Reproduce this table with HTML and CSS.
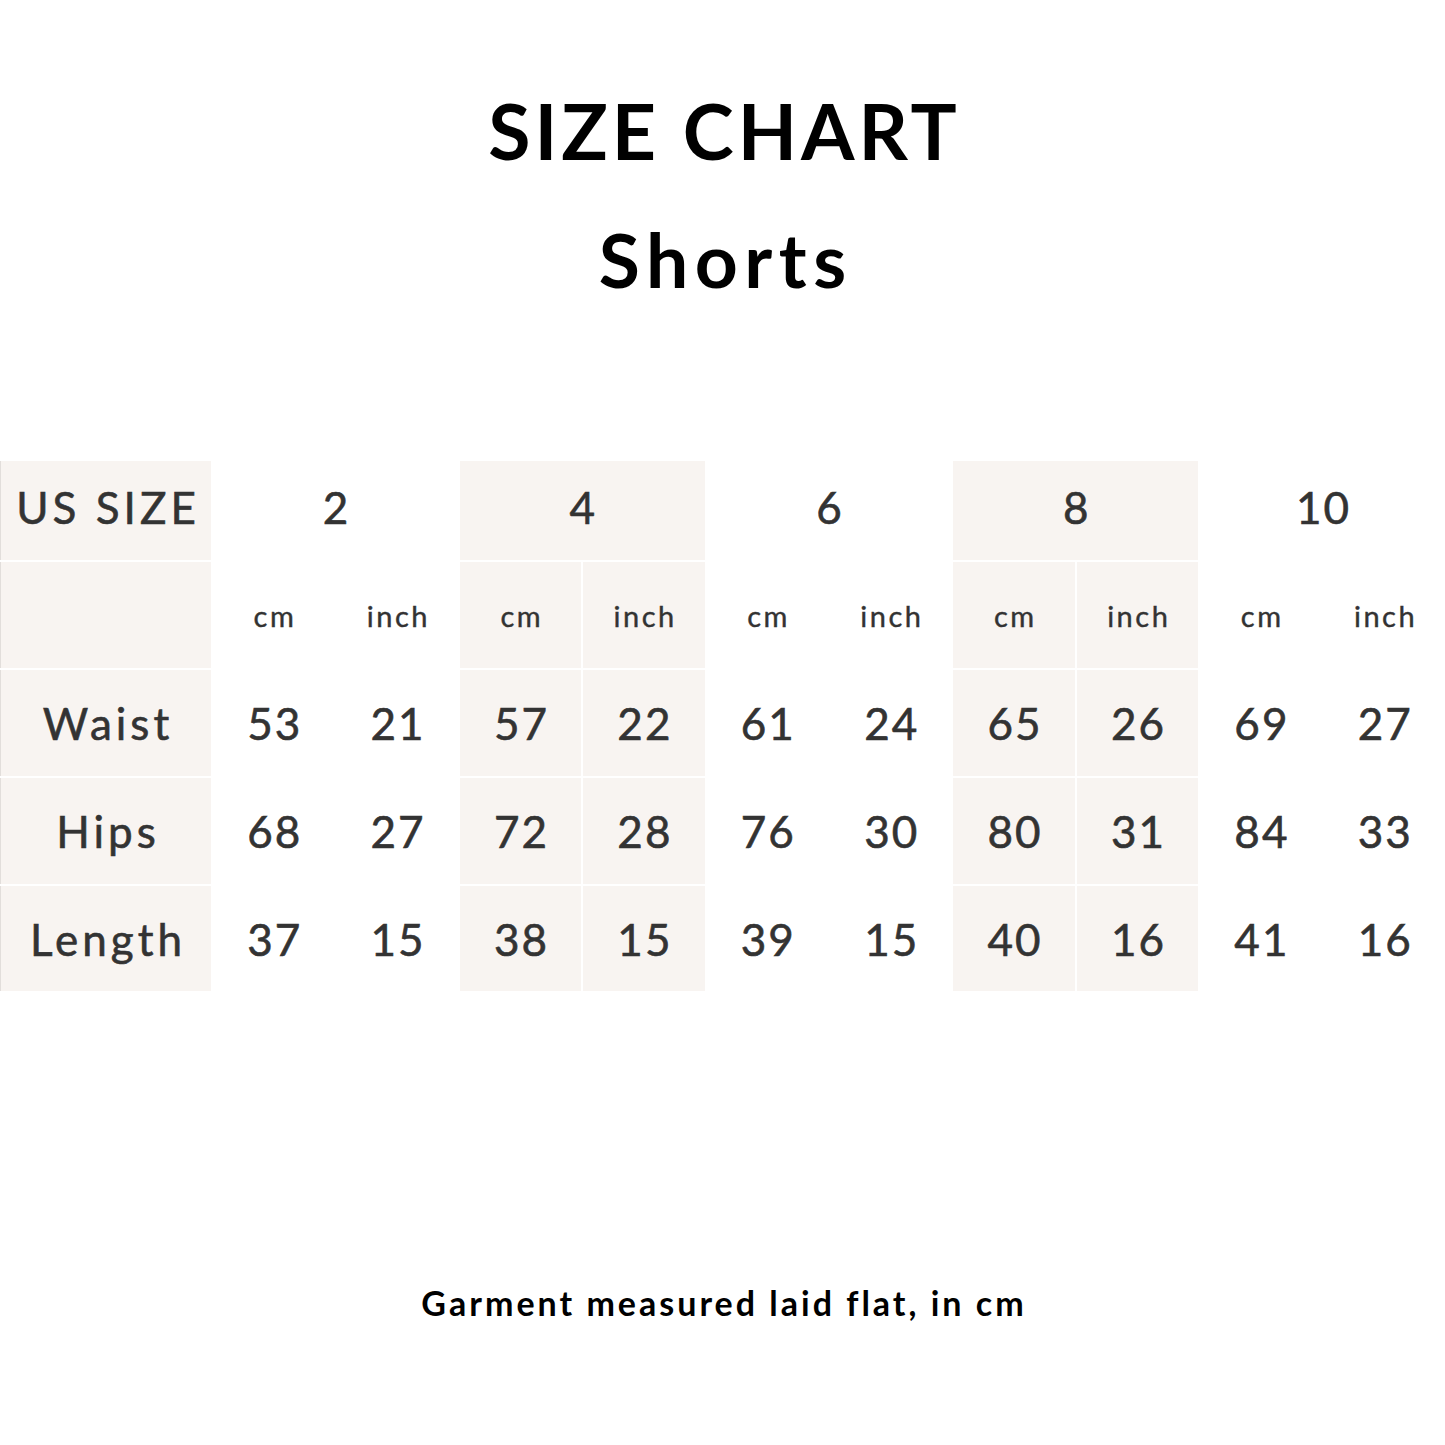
FILE: index.html
```html
<!DOCTYPE html>
<html>
<head>
<meta charset="utf-8">
<link rel="stylesheet" href="styles.css">
</head>
<body>
<div class="page">
  <div class="title">SIZE CHART</div>
  <div class="subtitle">Shorts</div>
  <div class="chart">
    <div class="cell label head shade">US SIZE</div>
    <div class="cell size head span2">2</div>
    <div class="cell size head span2 shade">4</div>
    <div class="cell size head span2">6</div>
    <div class="cell size head span2 shade">8</div>
    <div class="cell size head span2">10</div>

    <div class="cell label shade"></div>
    <div class="cell unit">cm</div><div class="cell unit">inch</div>
    <div class="cell unit shade">cm</div><div class="cell unit shade">inch</div>
    <div class="cell unit">cm</div><div class="cell unit">inch</div>
    <div class="cell unit shade">cm</div><div class="cell unit shade">inch</div>
    <div class="cell unit">cm</div><div class="cell unit">inch</div>

    <div class="cell label shade">Waist</div>
    <div class="cell num">53</div><div class="cell num">21</div>
    <div class="cell num shade">57</div><div class="cell num shade">22</div>
    <div class="cell num">61</div><div class="cell num">24</div>
    <div class="cell num shade">65</div><div class="cell num shade">26</div>
    <div class="cell num">69</div><div class="cell num">27</div>

    <div class="cell label shade">Hips</div>
    <div class="cell num">68</div><div class="cell num">27</div>
    <div class="cell num shade">72</div><div class="cell num shade">28</div>
    <div class="cell num">76</div><div class="cell num">30</div>
    <div class="cell num shade">80</div><div class="cell num shade">31</div>
    <div class="cell num">84</div><div class="cell num">33</div>

    <div class="cell label shade">Length</div>
    <div class="cell num">37</div><div class="cell num">15</div>
    <div class="cell num shade">38</div><div class="cell num shade">15</div>
    <div class="cell num">39</div><div class="cell num">15</div>
    <div class="cell num shade">40</div><div class="cell num shade">16</div>
    <div class="cell num">41</div><div class="cell num">16</div>
  </div>
  <div class="note">Garment measured laid flat, in cm</div>
</div>
</body>
</html>
```

FILE: styles.css
```css
html, body {
  margin: 0;
  padding: 0;
  background: #ffffff;
}
.page {
  width: 1445px;
  height: 1445px;
  font-family: Lato, "Noto Sans", sans-serif;
  color: #000;
  padding-top: 92px;
  box-sizing: border-box;
}
.title, .subtitle {
  font-weight: 700;
  font-size: 77px;
  line-height: 77px;
  letter-spacing: 4px;
  text-indent: 4px;
  text-align: center;
}
.subtitle {
  margin-top: 52px;
  font-size: 75px;
  letter-spacing: 6.5px;
  text-indent: 6.5px;
}
.chart {
  margin-top: 163px;
  display: grid;
  grid-template-columns: 211px repeat(10, 1fr);
  grid-template-rows: 99px 106px 106px 106px 105px;
  gap: 2px;
  color: #333;
  -webkit-text-stroke: 0.6px #333;
}
.cell {
  display: flex;
  align-items: center;
  justify-content: center;
  background: #fff;
}
.cell.head {
  padding-bottom: 7px;
}
.shade {
  background: #f8f4f1;
}
.span2 {
  grid-column: span 2;
}
.label {
  font-size: 44px;
  letter-spacing: 4px;
  text-indent: 4px;
  border-left: 1px solid #e2dedb;
}
.size, .num {
  font-size: 44px;
  letter-spacing: 2px;
  text-indent: 2px;
}
.unit {
  font-size: 29px;
  letter-spacing: 2.5px;
  text-indent: 2.5px;
  -webkit-text-stroke: 0.4px #333;
}
.note {
  margin-top: 294px;
  text-align: center;
  font-weight: 700;
  font-size: 34px;
  line-height: 35px;
  letter-spacing: 3px;
  text-indent: 3px;
}
```
